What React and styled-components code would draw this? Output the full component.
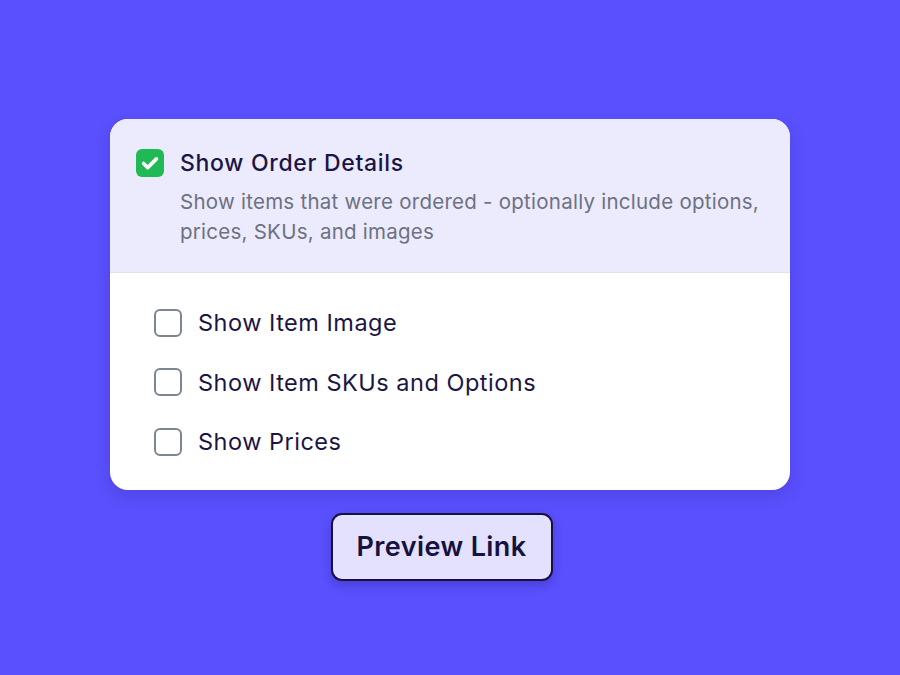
import React, { useState } from 'react';
import styled, { createGlobalStyle } from 'styled-components';

const GlobalStyle = createGlobalStyle`
  html, body {
    margin: 0;
    padding: 0;
    background: #5a50fd;
  }
  body {
    font-family: Inter, "Noto Sans", sans-serif;
  }
`;

const Page = styled.div`
  width: 900px;
  height: 675px;
  box-sizing: border-box;
  padding-top: 119px;
  display: flex;
  flex-direction: column;
  align-items: center;
  background: #5a50fd;
`;

const Card = styled.div`
  width: 680px;
  background: #ffffff;
  border-radius: 18px;
  overflow: hidden;
  box-shadow: 0 6px 16px rgba(30, 20, 120, 0.18);
`;

const Header = styled.div`
  background: #ecebfd;
  border-bottom: 1.5px solid #e1e0f0;
  padding: 30px 26px 25px 26px;
  display: flex;
  gap: 16px;
`;

const HeaderText = styled.div`
  display: flex;
  flex-direction: column;
`;

const Title = styled.div`
  font-size: 23px;
  letter-spacing: 0.7px;
  line-height: 30px;
  color: #1b1546;
  font-weight: 500;
  margin-top: -1px;
`;

const Desc = styled.div`
  font-size: 20.5px;
  letter-spacing: 0.25px;
  line-height: 30px;
  color: #6d7182;
  margin-top: 9px;
`;

const List = styled.div`
  padding: 20px 44px 18px 44px;
  display: flex;
  flex-direction: column;
`;

const Row = styled.label`
  display: flex;
  align-items: center;
  gap: 16px;
  height: 59.5px;
  cursor: pointer;
`;

const Box = styled.span`
  flex: none;
  width: 28px;
  height: 28px;
  box-sizing: border-box;
  border-radius: 6px;
  display: flex;
  align-items: center;
  justify-content: center;
  background: ${p => (p.checked ? '#1fb955' : '#ffffff')};
  border: ${p => (p.checked ? 'none' : '2px solid #7d8593')};
`;

const RowLabel = styled.span`
  font-size: 23.5px;
  letter-spacing: 0.5px;
  color: #1b1546;
`;

const PreviewButton = styled.button`
  margin: 23px 17px 0 0;
  width: 222px;
  height: 68px;
  border-radius: 11px;
  border: 2.5px solid #17113f;
  background: #e3e1fd;
  color: #17113f;
  font-family: Inter, "Noto Sans", sans-serif;
  font-size: 27px;
  letter-spacing: 0.4px;
  font-weight: 600;
  box-shadow: 0 4px 10px rgba(20, 10, 90, 0.25);
  cursor: pointer;
`;

const Check = () => (
  <svg width="22" height="22" viewBox="0 0 24 24" fill="none" stroke="#ffffff" strokeWidth="4" strokeLinecap="round" strokeLinejoin="round">
    <path d="M5 12.5l4.5 4.5L19 7.5" />
  </svg>
);

const options = ['Show Item Image', 'Show Item SKUs and Options', 'Show Prices'];

const App = () => {
  const [checked, setChecked] = useState([false, false, false]);

  return (
    <Page>
      <GlobalStyle />
      <Card>
        <Header>
          <Box checked>
            <Check />
          </Box>
          <HeaderText>
            <Title>Show Order Details</Title>
            <Desc>
              Show items that were ordered - optionally include options,
              <br />
              prices, SKUs, and images
            </Desc>
          </HeaderText>
        </Header>
        <List>
          {options.map((o, i) => (
            <Row key={o} onClick={() => setChecked(c => c.map((v, j) => (j === i ? !v : v)))}>
              <Box checked={checked[i]}>{checked[i] && <Check />}</Box>
              <RowLabel>{o}</RowLabel>
            </Row>
          ))}
        </List>
      </Card>
      <PreviewButton>Preview Link</PreviewButton>
    </Page>
  );
};

export default App;
